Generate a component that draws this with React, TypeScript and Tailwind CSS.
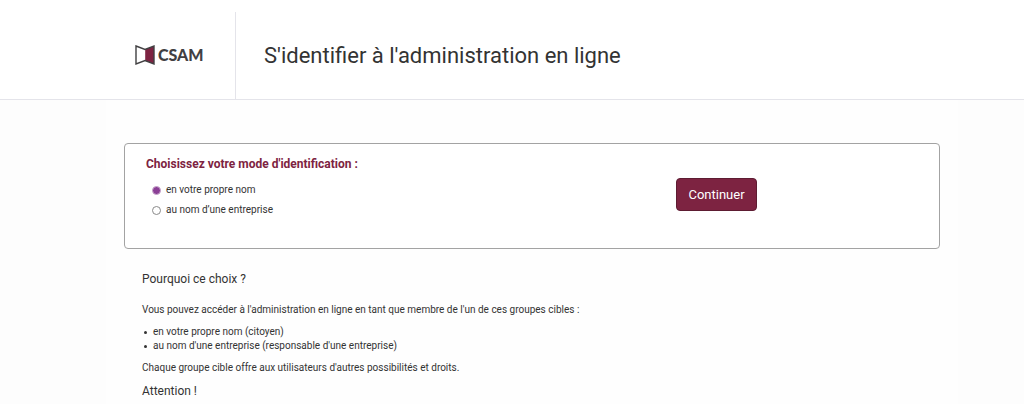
import React, { useState } from 'react';

type Mode = 'citizen' | 'company';

const modes: { id: Mode; label: string }[] = [
  { id: 'citizen', label: 'en votre propre nom' },
  { id: 'company', label: 'au nom d’une entreprise' },
];

const targetGroups = [
  'en votre propre nom (citoyen)',
  "au nom d'une entreprise (responsable d'une entreprise)",
];

const CsamLogo: React.FC = () => (
  <div className="flex items-center gap-[3px] pb-[2px]">
    <svg viewBox="0 0 20 20" className="w-5 h-5" aria-hidden="true">
      <path d="M10.2 4.4 L19 1 V19 L10.2 15.6 Z" fill="#7d2341" />
      <path
        d="M1 1 L10 4.4 L19 1 V19 L10 15.6 L1 19 Z"
        fill="none"
        stroke="#414042"
        strokeWidth="1.4"
      />
    </svg>
    <span className="font-[Lato] font-black text-[16px] leading-5 text-[#414042]">CSAM</span>
  </div>
);

const Header: React.FC = () => (
  <header className="flex pt-3 bg-white border-b border-[#e4e4ea]">
    <div className="w-[236px] h-[87px] shrink-0 flex items-center pl-[135px] border-r border-[#e4e4ea]">
      <CsamLogo />
    </div>
    <div className="flex items-center pl-7">
      <h1 className="text-[22px] leading-7 text-[#333333]">S'identifier à l'administration en ligne</h1>
    </div>
  </header>
);

const ModeForm: React.FC = () => {
  const [mode, setMode] = useState<Mode>('citizen');

  return (
    <form
      className="flex bg-white border border-[#a3a3a3] rounded-[4px] pt-3 pb-7 pl-[21px]"
      onSubmit={(e) => e.preventDefault()}
    >
      <fieldset className="w-[530px]">
        <legend className="text-[12px] leading-4 font-bold text-[#7d2341]">
          Choisissez votre mode d'identification :
        </legend>
        <div className="pt-2 pl-[6px]">
          {modes.map(({ id, label }) => (
            <div key={id} className="h-5 flex items-center gap-[5px]">
              <input
                id={id}
                type="radio"
                name="mode"
                checked={mode === id}
                onChange={() => setMode(id)}
                className="appearance-none w-[9px] h-[9px] rounded-full border border-[#8a8a8a] bg-white checked:border-[#c9a8cc] checked:bg-[#8b3f96]"
              />
              <label htmlFor={id} className="text-[10px] leading-4">{label}</label>
            </div>
          ))}
        </div>
      </fieldset>
      <div className="pt-[22px]">
        <button
          type="submit"
          className="w-[81px] h-[33px] rounded-[4px] border border-[#5d1c32] bg-[#7d2341] text-[13px] leading-4 text-white"
        >
          Continuer
        </button>
      </div>
    </form>
  );
};

export default function App() {
  return (
    <div className="min-h-screen bg-[#fdfdfd] font-[Roboto,sans-serif] text-[#333333]">
      <Header />
      <main className="ml-[106px] mr-[66px] min-h-[calc(100vh-100px)] px-[18px] pt-[43px] bg-[#fefefe]">
        <ModeForm />
        <section className="pl-[18px] pt-[22px] text-[10px] leading-[14px]">
          <h2 className="text-[12px] leading-4">Pourquoi ce choix ?</h2>
          <p className="mt-4">
            Vous pouvez accéder à l'administration en ligne en tant que membre de l'un de ces groupes cibles :
          </p>
          <ul className="mt-2 pl-[2px]">
            {targetGroups.map((group) => (
              <li
                key={group}
                className="flex items-center gap-[6px] before:w-[3px] before:h-[3px] before:rounded-full before:bg-[#333333]"
              >
                {group}
              </li>
            ))}
          </ul>
          <p className="mt-2">Chaque groupe cible offre aux utilisateurs d'autres possibilités et droits.</p>
          <h2 className="mt-2 text-[12px] leading-4">Attention !</h2>
        </section>
      </main>
    </div>
  );
}
